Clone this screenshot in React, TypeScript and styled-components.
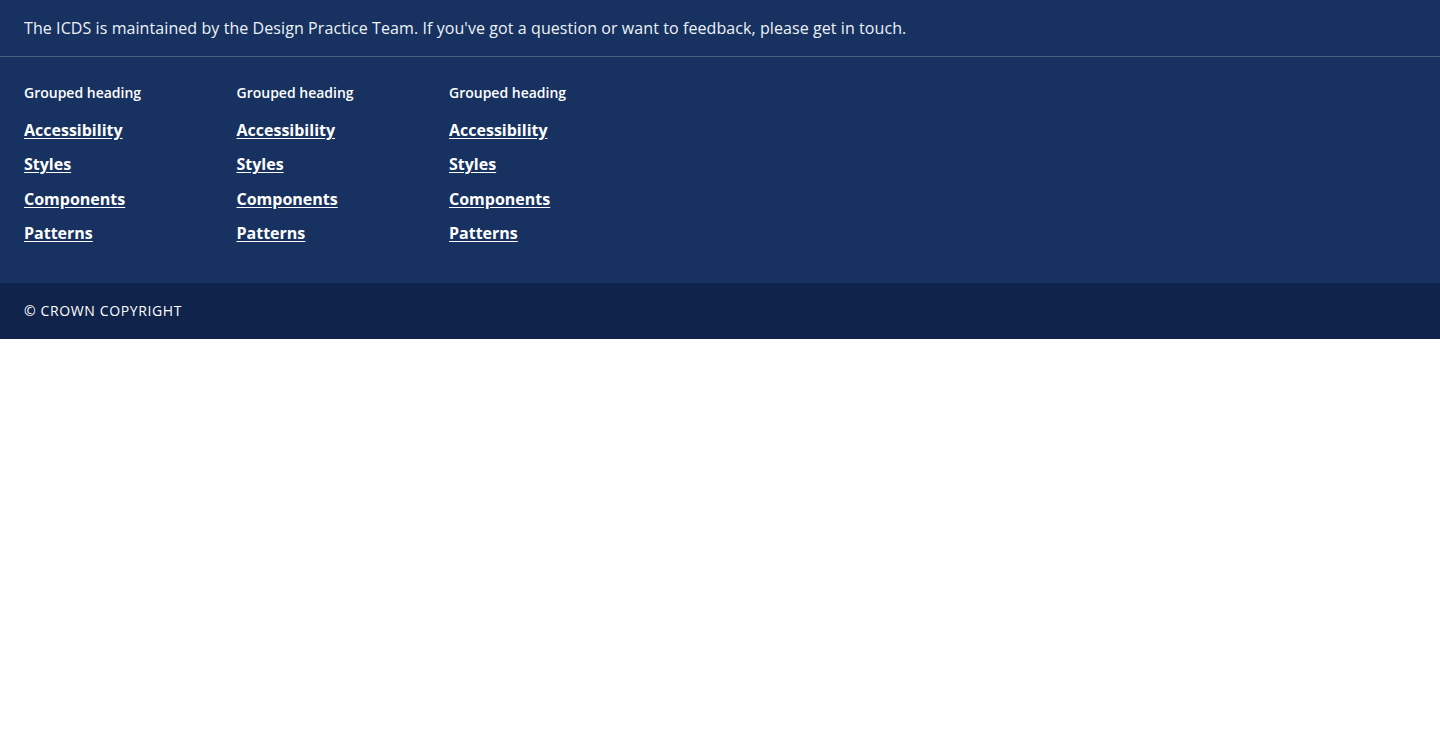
import React from 'react';
import styled, { createGlobalStyle } from 'styled-components';

const GlobalStyle = createGlobalStyle`
  html, body {
    margin: 0;
    padding: 0;
    background: #ffffff;
  }
  body {
    font-family: "Open Sans", "Noto Sans", Arial, sans-serif;
  }
`;

const groups = [
  { heading: 'Grouped heading', links: ['Accessibility', 'Styles', 'Components', 'Patterns'] },
  { heading: 'Grouped heading', links: ['Accessibility', 'Styles', 'Components', 'Patterns'] },
  { heading: 'Grouped heading', links: ['Accessibility', 'Styles', 'Components', 'Patterns'] },
];

const App = () => {
  return (
    <>
      <GlobalStyle />
      <Footer>
        <Intro>
          The ICDS is maintained by the Design Practice Team. If you've got a question or want to
          feedback, please get in touch.
        </Intro>
        <Groups>
          {groups.map((group, i) => (
            <Group key={i}>
              <GroupHeading>{group.heading}</GroupHeading>
              <LinkList>
                {group.links.map((link) => (
                  <li key={link}>
                    <FooterLink href="#">{link}</FooterLink>
                  </li>
                ))}
              </LinkList>
            </Group>
          ))}
        </Groups>
        <Copyright>© Crown copyright</Copyright>
      </Footer>
    </>
  );
};

const Footer = styled.footer`
  background: #173160;
  color: #ffffff;
`;

const Intro = styled.p`
  margin: 0;
  padding: 16px 24px;
  font-size: 16px;
  line-height: 24px;
  letter-spacing: 0.08px;
  color: #eef1f6;
  border-bottom: 1px solid #4b5f82;
`;

const Groups = styled.div`
  display: flex;
  padding: 26px 24px 38px;
`;

const Group = styled.div`
  width: 212.5px;
  display: flex;
  flex-direction: column;
`;

const GroupHeading = styled.h2`
  margin: 0 0 15px;
  font-size: 14px;
  line-height: 20px;
  font-weight: 600;
`;

const LinkList = styled.ul`
  list-style: none;
  margin: 0;
  padding: 0;
  display: flex;
  flex-direction: column;
  gap: 10.4px;
`;

const FooterLink = styled.a`
  color: #ffffff;
  font-size: 16px;
  line-height: 24px;
  font-weight: 700;
  text-decoration: underline;
  text-underline-offset: 2px;
`;

const Copyright = styled.div`
  background: #10234b;
  padding: 18px 24px;
  font-size: 14px;
  line-height: 20px;
  font-weight: 500;
  text-transform: uppercase;
  letter-spacing: 0.62px;
`;

export default App;
